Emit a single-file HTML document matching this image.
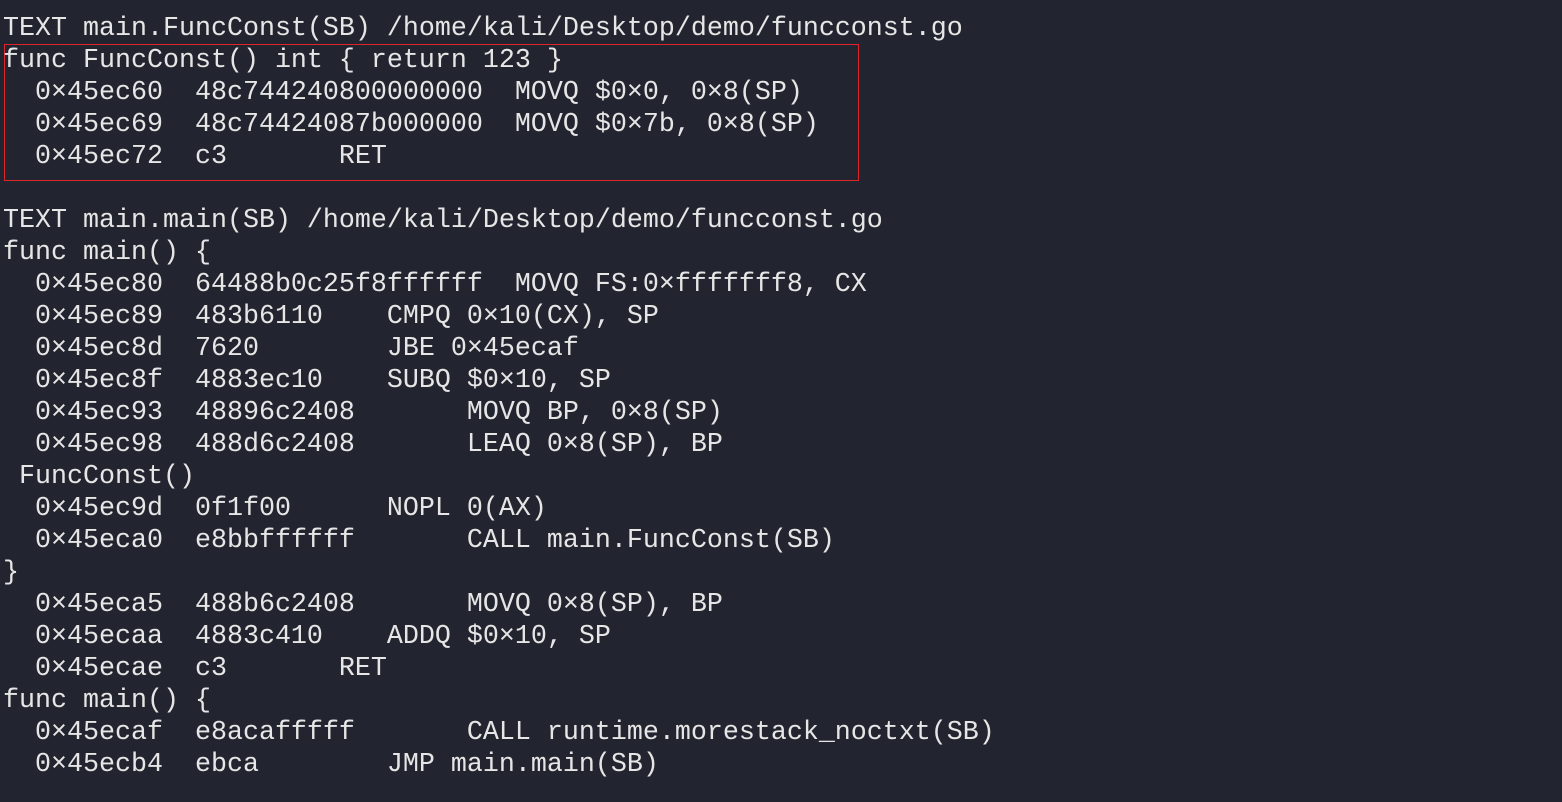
<!DOCTYPE html>
<html><head><meta charset="utf-8"><style>
html,body{margin:0;padding:0;background:#22252f;width:1562px;height:802px;overflow:hidden}
pre{position:absolute;left:3px;top:13px;margin:0;font-family:"Liberation Mono","DejaVu Sans Mono",monospace;font-size:26.67px;line-height:32px;color:#e6e6e6;letter-spacing:0}
.box{position:absolute;left:4px;top:44px;width:853px;height:135px;border:1.5px solid #e0242c}
</style></head><body>
<div class="box"></div>
<pre>TEXT main.FuncConst(SB) /home/kali/Desktop/demo/funcconst.go
func FuncConst() int { return 123 }
  0×45ec60  48c744240800000000  MOVQ $0×0, 0×8(SP)
  0×45ec69  48c74424087b000000  MOVQ $0×7b, 0×8(SP)
  0×45ec72  c3       RET

TEXT main.main(SB) /home/kali/Desktop/demo/funcconst.go
func main() {
  0×45ec80  64488b0c25f8ffffff  MOVQ FS:0×fffffff8, CX
  0×45ec89  483b6110    CMPQ 0×10(CX), SP
  0×45ec8d  7620        JBE 0×45ecaf
  0×45ec8f  4883ec10    SUBQ $0×10, SP
  0×45ec93  48896c2408       MOVQ BP, 0×8(SP)
  0×45ec98  488d6c2408       LEAQ 0×8(SP), BP
 FuncConst()
  0×45ec9d  0f1f00      NOPL 0(AX)
  0×45eca0  e8bbffffff       CALL main.FuncConst(SB)
}
  0×45eca5  488b6c2408       MOVQ 0×8(SP), BP
  0×45ecaa  4883c410    ADDQ $0×10, SP
  0×45ecae  c3       RET
func main() {
  0×45ecaf  e8acafffff       CALL runtime.morestack_noctxt(SB)
  0×45ecb4  ebca        JMP main.main(SB)
</pre>
</body></html>
